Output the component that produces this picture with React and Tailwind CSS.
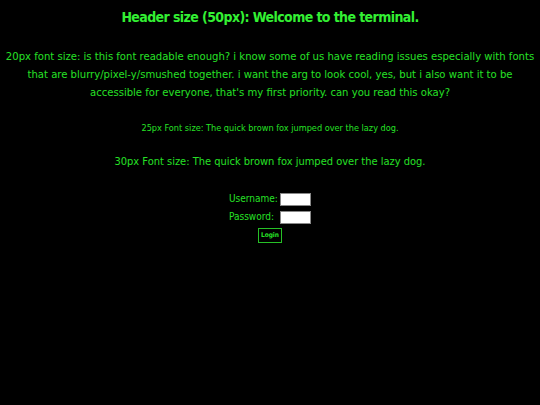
import React from "react";

const font = { fontFamily: '"DejaVu Sans Condensed", "DejaVu Sans Mono", monospace' };

export default function App() {
  return (
    <div className="w-[540px] h-[405px] bg-black text-[#26e026] flex flex-col items-center overflow-hidden" style={font}>
      <h1 className="mt-[7px] h-[20px] leading-[20px] text-[14px] tracking-[-0.6px] font-bold text-[#33f033] whitespace-nowrap">
        Header size (50px): Welcome to the terminal.
      </h1>
      <p className="mt-[21px] w-[534px] text-center text-[11.2px] leading-[18px]">
        20px font size: is this font readable enough? i know some of us have reading issues especially with fonts that are blurry/pixel-y/smushed together. i want the arg to look cool, yes, but i also want it to be accessible for everyone, that's my first priority. can you read this okay?
      </p>
      <p className="mt-[18px] h-[16px] leading-[16px] text-[9.1px] whitespace-nowrap">
        25px Font size: The quick brown fox jumped over the lazy dog.
      </p>
      <p className="mt-[17px] h-[18px] leading-[18px] text-[11px] whitespace-nowrap">
        30px Font size: The quick brown fox jumped over the lazy dog.
      </p>
      <div className="mt-[20px] flex flex-col items-center gap-[2px]">
        <div className="flex items-center gap-[6px] h-[16px]">
          <span className="w-[45px] text-right text-[10px] leading-[16px] whitespace-nowrap">Username:</span>
          <input className="w-[31px] h-[13px] bg-white border border-[#888] outline-none" />
        </div>
        <div className="flex items-center gap-[6px] h-[16px]">
          <span className="w-[45px] text-right text-[10px] leading-[16px] whitespace-nowrap">Password:</span>
          <input type="password" className="w-[31px] h-[13px] bg-white border border-[#888] outline-none" />
        </div>
        <button className="mt-[1px] w-[24px] h-[15px] border border-[#26c026] text-[6.5px] font-semibold leading-[13px] text-[#26e026]" style={font}>
          Login
        </button>
      </div>
    </div>
  );
}
